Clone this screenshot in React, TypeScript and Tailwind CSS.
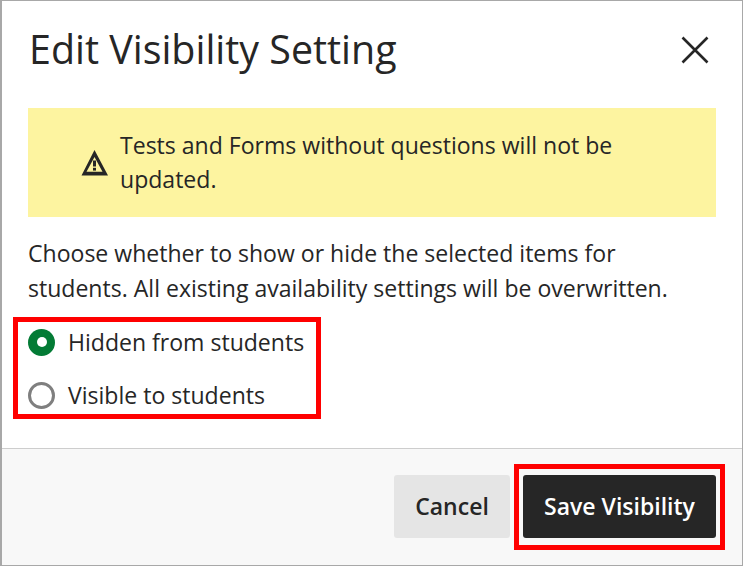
const App = () => {
  return (
    <div className="flex h-[566px] w-[743px] flex-col border-t border-r border-b border-l-2 border-[#a8a8a8] bg-white font-['Open_Sans',sans-serif] text-[#262626]">
      <div className="flex flex-1 flex-col pl-[26px] pr-[26px]">
        {/* Header */}
        <div className="flex h-[107px] items-start justify-between">
          <h1 className="ml-[1px] mt-[23px] text-[39.4px] leading-[50px]">Edit Visibility Setting</h1>
          <button className="mr-[7px] mt-[35px]" aria-label="Close">
            <svg width="28" height="28" viewBox="0 0 28 28" fill="none" stroke="#262626" strokeWidth="2.6">
              <path d="M1.5 1.5L26.5 26.5M26.5 1.5L1.5 26.5" />
            </svg>
          </button>
        </div>

        {/* Warning */}
        <div className="flex h-[109px] items-center bg-[#fdf4a0] pb-[1px] pl-[53px] pr-[40px]">
          <svg className="mr-[12px] shrink-0" width="27" height="27" viewBox="0 0 27 27">
            <path fillRule="evenodd" fill="#262626" d="M13.5 1L27 26.5H0.5ZM13.5 8L5.5 22.8H21.5Z" />
            <rect x="12" y="11.5" width="3" height="6" fill="#262626" />
            <rect x="12" y="18.8" width="3" height="2.8" fill="#262626" />
          </svg>
          <p className="-mt-[1px] text-[23.05px] leading-[34px]">Tests and Forms without questions will not be updated.</p>
        </div>

        <p className="mt-[19px] w-[660px] text-[23.05px] leading-[35px]">
          Choose whether to show or hide the selected items for students. All existing availability settings will be overwritten.
        </p>

        {/* Radios */}
        <div className="relative mt-[14px] flex w-[290px] flex-col">
          <div className="absolute -left-[15px] -top-[3px] h-[102px] w-[308px] border-[5px] border-[#ff0000]" />
          <label className="flex h-[44px] items-center gap-[13px]">
            <span className="flex h-[27px] w-[27px] items-center justify-center rounded-full bg-[#037b35]">
              <span className="h-[10px] w-[10px] rounded-full bg-white" />
            </span>
            <span className="text-[23.05px]">Hidden from students</span>
          </label>
          <label className="mt-[9px] flex h-[44px] items-center gap-[13px]">
            <span className="h-[27px] w-[27px] rounded-full border-[3px] border-[#7f7f7f] bg-white" />
            <span className="text-[23.05px]">Visible to students</span>
          </label>
        </div>
      </div>

      {/* Footer */}
      <div className="flex h-[117px] justify-end gap-[13px] border-t border-[#cdcdcd] bg-[#f8f8f8] pr-[26px] pt-[26px]">
        <button className="h-[63px] w-[116px] rounded-[3px] bg-[#e5e5e5] text-[23px] font-semibold text-[#262626]">
          Cancel
        </button>
        <div className="relative">
          <div className="absolute -left-[9px] -top-[11px] h-[86px] w-[211px] border-[5px] border-[#ff0000]" />
          <button className="h-[63px] w-[193px] rounded-[3px] bg-[#262626] text-[23px] font-semibold text-white">
            Save Visibility
          </button>
        </div>
      </div>
    </div>
  );
};

export default App;
